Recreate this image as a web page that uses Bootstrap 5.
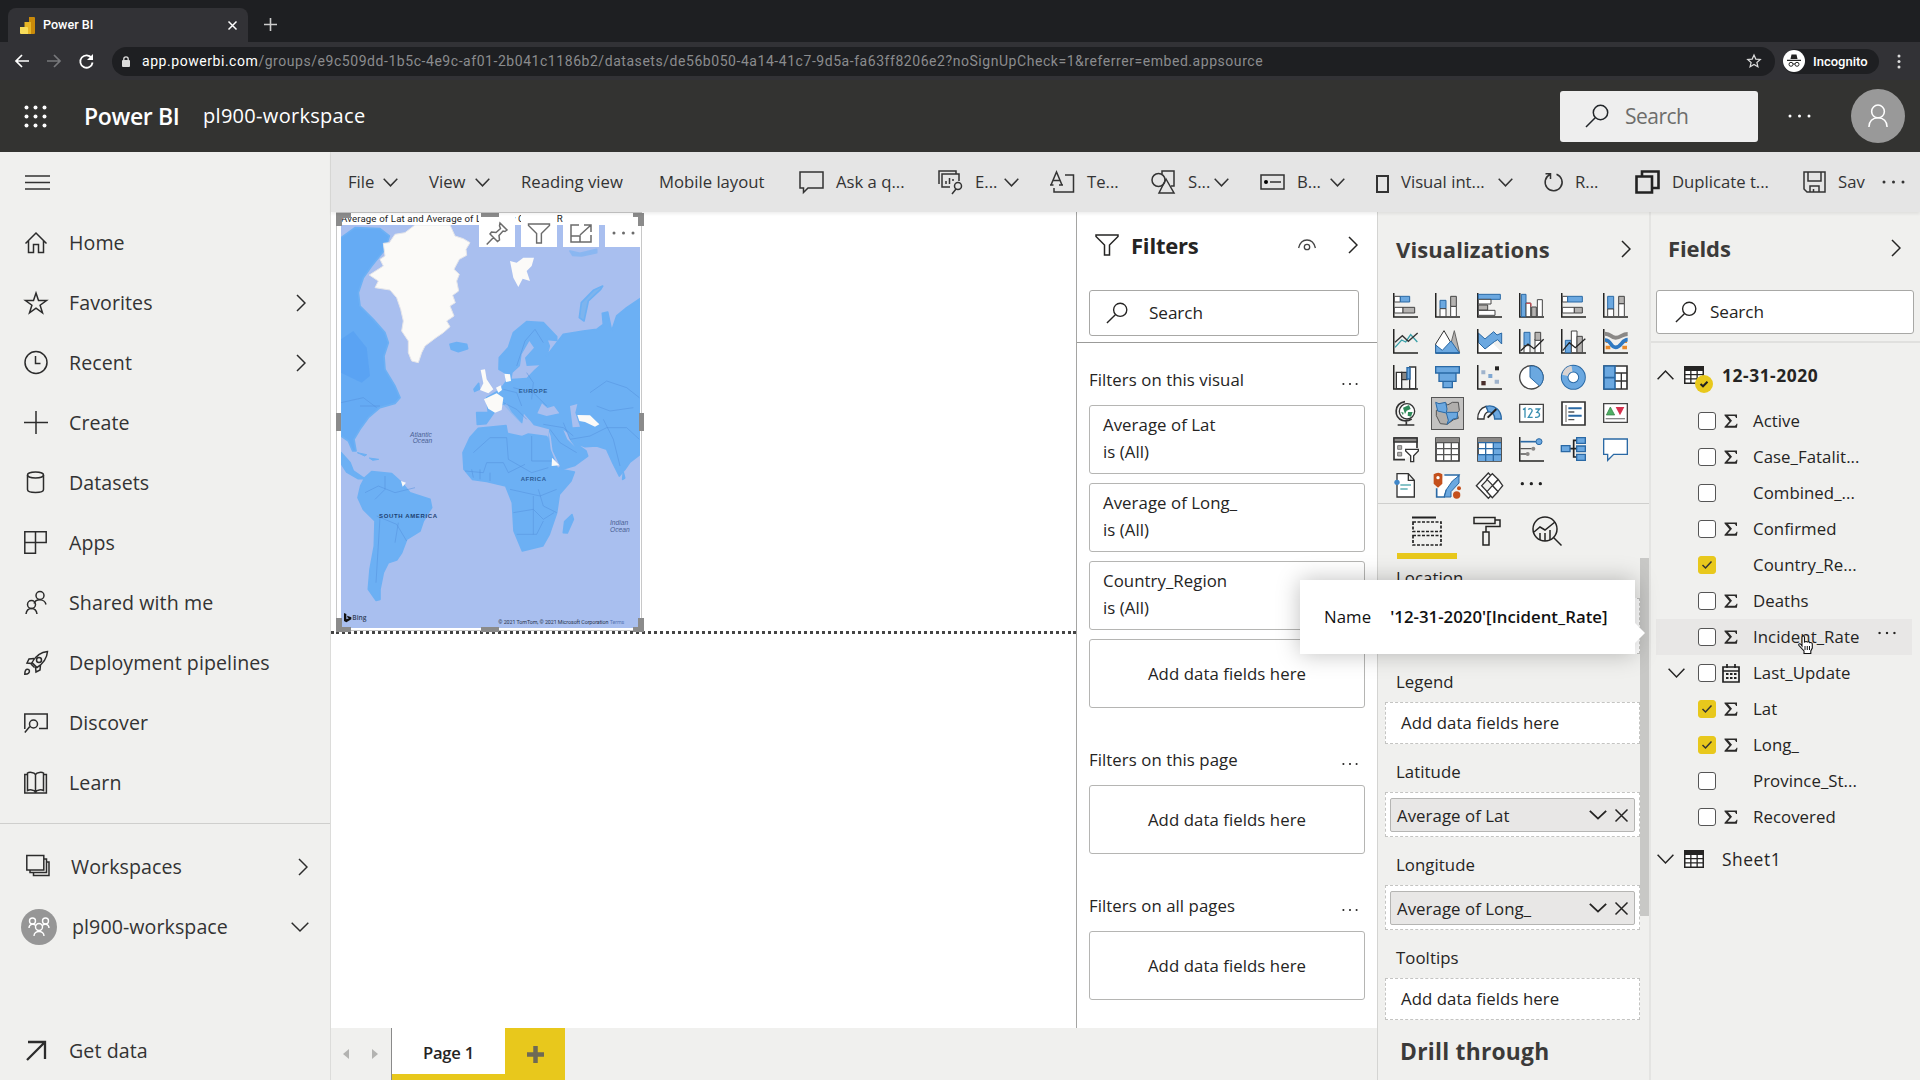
<!DOCTYPE html>
<html lang="en">
<head>
<meta charset="utf-8">
<title>Power BI</title>
<meta name="viewport" content="width=device-width, initial-scale=1">
<link href="https://cdn.jsdelivr.net/npm/bootstrap@5.3.0/dist/css/bootstrap.min.css" rel="stylesheet">
<style>
:root{--ink:#252423;--pane:#f0f0ee;--gold:#e8c81c}
body{width:1920px;height:1080px;overflow:hidden;font-family:"Open Sans","Noto Sans",sans-serif;font-size:17px;line-height:22px;color:var(--ink);background:#fff;margin:0}
svg{display:block;flex:none;overflow:visible}
.ln{fill:none;stroke:currentColor;stroke-width:1.5}
.nowrap{white-space:nowrap}
/* browser chrome */
.tabstrip{height:42px;background:#1e1f22;padding:8px 0 0 8px}
.tab{width:240px;height:34px;background:#323236;border-radius:8px 8px 0 0;padding:0 11px 0 12px;color:#fff;font:500 12.6px/34px Roboto,sans-serif}
.urlbar{height:38px;background:#323236;color:#fff;padding:0 15px}
.omni{width:1663px;height:29px;border-radius:15px;background:#1e1f22;padding:0 14px 0 10px;font:14px/28px Roboto,sans-serif;color:#8b8c8e;margin-left:18px}
.omni b{font-weight:400;color:#fff}
.url{letter-spacing:.55px}
.incog{width:96px;height:25px;border-radius:13px;background:#1e1f22;font:500 13px/25px Roboto,sans-serif}
/* app header */
.apphead{height:72px;background:#333331;color:#fff;padding-left:24px;padding-right:15px}
.brand{font-size:23px;font-weight:600;line-height:30px;letter-spacing:-.35px;width:119px;margin-left:37px}
.wsname{font-size:20px;letter-spacing:.3px}
.headsearch{width:198px;height:51px;border-radius:3px;background:#eee;color:#6d6d6b;font-size:21px;letter-spacing:-.5px;padding-left:25px}
.headdots{width:23px;margin:0 40px 0 30px}
.avatar{width:54px;height:54px;border-radius:50%;background:#999}
/* left navigation */
.sidenav{width:331px;background:var(--pane);border-right:1px solid #dcdcda;font-size:19.6px;letter-spacing:.08px}
.burger{height:61px;padding:0 0 2px 25px}
.navrow{height:60px;padding-left:24px;padding-right:24px;color:#333}
.navrow svg:first-child{width:24px;height:24px;margin-right:21px;color:#2c2c2c}
.navrow .chev{color:#2c2c2c}
.navrow.wsl{padding-left:26px;padding-right:22px}
.navrow.wsx{padding-right:21px}
.navrow.getd{margin-bottom:-1px}
.navsep{height:0;border-top:1px solid #cfcfcd;margin:10px 0 13px}
.wsicon{width:36px;height:36px;border-radius:50%;background:#969696;margin-left:-3px;margin-right:15px}
/* toolbar */
.ribbon{height:60px;background:#e5e5e5;padding-left:17px;color:#333;font-size:16.7px;box-shadow:0 2px 3px #0001;position:relative;z-index:2}
.rb{height:60px;display:flex;align-items:center;white-space:nowrap;flex:none}
.rb>svg:first-child:not(.cv){margin-right:12px}
.rb .cv{margin-left:auto;margin-right:31px}
.w81{width:81px}.w92{width:92px}.w138{width:138px}.w140{width:140px}.w139{width:139px}.w112{width:112px}.w101{width:101px}.w109{width:109px}.w116{width:116px}.w168{width:168px}.w91{width:91px}.w79{width:79px}
/* canvas */
.leftcol{width:1046px}
.canvas{width:745px;height:816px;position:relative}
.pagebreak{position:absolute;left:0;right:0;top:419px;border-top:3px dotted #444}
.visual{position:absolute;left:5px;top:0;width:306px;height:419px;border:1px solid #c8c8c8;background:#fff}
.vtitle{font:9.7px/12px Roboto,sans-serif;height:12px;padding-left:4px;letter-spacing:.12px;color:#222;white-space:nowrap;overflow:hidden}
.mapsvg{margin-left:4px}
.vtools{position:absolute;left:142px;top:2px;gap:6px;color:#6b6b6b}
.vtools>span{width:36px;height:32px;background:#fff;display:flex;align-items:center;justify-content:center;padding-top:4px}
.handles{position:absolute;left:-1px;top:0}
/* filter pane */
.filters{width:301px;border-left:1px solid #a5a5a3;padding-left:12px}
.fhead{height:68px;padding:0 15px 2px 6px}
.ptitle{font-weight:700;font-size:22px;letter-spacing:-.2px;color:#252423}
.sbox{border:1px solid #a8a8a6;border-radius:3px;background:#fff;font-size:17.2px;letter-spacing:-.1px}
.fsearch{width:270px;height:46px;margin-top:10px;padding-left:16px;gap:21px}
.fsep{border-top:1px solid #9b9b99;margin:6px 0 0 -12px}
.fsec{height:77px;padding:27px 19px 0 0}
.fsec.first{height:62px;padding-top:12px}
.fsec svg{margin-top:8px}
.fcard{width:276px;height:69px;border:1px solid #b5b5b3;border-radius:3px;padding:5px 13px;line-height:27px;margin-bottom:9px}
.fcard.add{padding:0;display:flex;align-items:center;justify-content:center}
.fcard.end{margin-bottom:0}
.t17{font-size:16.8px;letter-spacing:.06px}
/* page tabs */
.pagebar{height:52px;background:var(--pane)}
.pgnav{width:61px;padding:0 13px 0 12px;border-right:1px solid #8a8a8a;color:#b3b3b1}
.pgtab{width:113px;background:#fff;border-bottom:6px solid var(--gold);font-weight:600;font-size:16.6px;letter-spacing:-.2px;padding-top:4px}
.pgadd{width:60px;background:var(--gold);color:#6e6a55}
/* visualizations */
.viz{width:272px;background:var(--pane);border-left:1px solid #d4d4d2}
.vhead{height:75px;padding:0 18px 2px 18px}
.vhead .ptitle,.flds .ptitle{color:#3b3a39;letter-spacing:.1px}
.vgrid{display:grid;grid-template-columns:repeat(6,42px);grid-auto-rows:36px;padding-left:6px;border-bottom:1px solid #cfcfcd;place-items:center}
.vgrid>svg{width:25px;height:25px}
.vsel{width:33px;height:33px;border:1px solid #555;background:#c4c3c2;display:flex;align-items:center;justify-content:center}
.vtabs{height:55px;padding-left:19px}
.vtabs>span{width:60px;border-bottom:6px solid transparent;display:flex;align-items:center;justify-content:center;padding-top:4px}
.vtabs>span.on{border-color:var(--gold)}
.wells{width:262px;padding-left:7px}
.wl{height:48px;padding:8px 0 0 11px;line-height:40px}
.wl.loc{height:39px;padding-top:0;line-height:38px}
.wb{width:255px;height:42px;background:#fff;border:1px dashed #c4c4c2;line-height:40px;padding-left:15px}
.wb.lbx{height:56px}
.wb.has{height:45px;padding:5px 4px}
.chip{height:34px;border:1px solid #b5b5b3;border-radius:2px;background:#e8e7e6;padding:0 6px;line-height:31px}
.vbar{width:9px;height:358px;background:#c8c8c6;margin-top:-1px}
.flds .ptitle{letter-spacing:-.1px}
.viz .drill{padding:19px 0 0 15px;height:60px;line-height:26px;white-space:nowrap;letter-spacing:.25px;font-size:22.8px;color:#3b3a39}
/* fields */
.flds{width:271px;background:var(--pane);border-left:2px solid #e4e4e2}
.ffhead{height:78px;padding:0 19px 6px 17px}
.ffsearch{width:258px;height:44px;margin-left:5px;padding-left:18px;gap:13px}
.ffsep{border-top:2px solid #e0e0de;margin-top:7px}
.tblrow{height:60px;padding:4px 0 0 6px}
.tblrow.shut{height:48px;padding-top:0}
.tname{font-size:17.4px;letter-spacing:.55px;padding-left:18px}
.tico{margin-left:10px}
.frow{height:36px;margin:0 8px 0 5px;padding-left:12px}
.frow.hot{background:#e8e7e6}
.crt{width:17px;margin-right:13px}
.cb{width:18px;height:18px;border:1px solid #555;border-radius:3px;background:#fff;margin-right:8px;flex:none}
.cb.on{background:var(--gold);border-color:var(--gold)}
.typ{width:16px;margin-right:13px}
.typ .cal{margin-left:-2px}
/* field tooltip */
.tip{position:absolute;left:1300px;top:580px;width:335px;height:74px;background:#fff;box-shadow:0 0 22px rgba(0,0,0,.25);padding-left:24px;z-index:5;color:#111}
.tip::after{content:"";position:absolute;right:-10px;top:43px;border:10px solid transparent;border-left-color:#fff;border-right:0}
.tip b{font-weight:600;margin-left:19px;letter-spacing:.02px}
.hand{position:absolute;left:1798px;top:635px;z-index:6}
</style>
<script src="https://cdn.jsdelivr.net/npm/bootstrap@5.3.0/dist/js/bootstrap.bundle.min.js"></script>
</head>
<body class="d-flex flex-column">
<svg width="0" height="0" class="position-absolute">
<defs>
<symbol id="cvd" viewBox="0 0 15 9"><path class="ln" d="M.7.8 7.500 7.800 14.300.8"/></symbol>
<symbol id="cvr" viewBox="0 0 10 18"><path class="ln" d="M1 1l8 8-8 8"/></symbol>
<symbol id="mag" viewBox="0 0 24 24"><g class="ln"><circle cx="15.500" cy="8.500" r="7.200"/><path d="M10.200 13.800 1 23"/></g></symbol>
<symbol id="dots" viewBox="0 0 23 4"><g fill="currentColor"><circle cx="2" cy="2" r="1.500"/><circle cx="11.500" cy="2" r="1.500"/><circle cx="21" cy="2" r="1.500"/></g></symbol>
<symbol id="fun" viewBox="0 0 24 22"><path class="ln" d="M1 1h22v1.500l-8.500 8.500v10h-5V11L1 2.500z"/></symbol>
<symbol id="sig" viewBox="0 0 14 14"><path d="M.5.500H13V4h-1C11.700 2.500 11 2 9.500 2H4l4 4.700L3.600 11.700h6.200c1.700 0 2.200-.6 2.700-2h1L12.900 13.700H.5v-1L5.400 7.200.5 1.400z" fill="#2b2a29"/></symbol>
<symbol id="tbl" viewBox="0 0 20 18"><path fill="#252423" d="M0 0h20v18H0z"/><path fill="#fff" d="M1.500 5h4.700v3H1.500zm6 0h5v3h-5zm6.300 0h4.700v3h-4.700zM1.500 9.200h4.700v3H1.500zm6 0h5v3h-5zm6.300 0h4.700v3h-4.700zM1.500 13.500h4.700v3H1.500zm6 0h5v3h-5zm6.300 0h4.700v3h-4.700z"/></symbol>
<symbol id="tick" viewBox="0 0 16 16"><path d="M3.500 8l3 3 6-6.500" fill="none" stroke="#333" stroke-width="1.500"/></symbol>
<symbol id="axes" viewBox="0 0 75 75"><path d="M2 0v72h73" fill="none" stroke="#252423" stroke-width="5"/></symbol>
</defs>
</svg>

<!-- browser -->
<div class="tabstrip d-flex">
  <div class="tab d-flex align-items-center">
    <svg width="15" height="17" viewBox="0 0 15 17"><path fill="#c98a0a" d="M9 0h5q1 0 1 1v15q0 1-1 1H9z"/><path fill="#e9b625" d="M4.500 5H11v12H4.500z"/><path fill="#f7dc5a" d="M0 10h7q1 0 1 1v6H1q-1 0-1-1z"/></svg>
    <span class="ms-2">Power BI</span>
    <svg class="ms-auto" width="9" height="9" viewBox="0 0 9 9"><path d="M.5.500l8 8m0-8l-8 8" stroke="#fff" stroke-width="1.500"/></svg>
  </div>
  <svg class="ms-3 mt-2" width="13" height="17" viewBox="0 0 13 13"><path d="M6.500 0v13M0 6.500h13" stroke="#ccc" stroke-width="1.600"/></svg>
</div>
<div class="urlbar d-flex align-items-center">
  <svg width="14" height="14" viewBox="0 0 14 14"><path d="M14 7H1.500M7 1L1 7l6 6" fill="none" stroke="#fff" stroke-width="1.700"/></svg>
  <svg class="ms-3 me-3" width="18" height="14" viewBox="-2 0 18 14"><path d="M0 7h12.500M7 1l6 6-6 6" fill="none" stroke="#77787b" stroke-width="1.700"/></svg>
  <svg width="15" height="15" viewBox="0 0 15 15"><path d="M12.600 4A6.200 6.200 0 1 0 13.600 8.500" fill="none" stroke="#fff" stroke-width="1.800"/><path d="M14 0v6H8z" fill="#fff"/></svg>
  <div class="omni d-flex align-items-center">
    <svg width="8" height="11" viewBox="0 0 8 11"><rect y="4" width="8" height="7" rx="1" fill="#ddd"/><path d="M1.800 4.500V3a2.200 2.200 0 0 1 4.400 0v1.500" fill="none" stroke="#ddd" stroke-width="1.300"/></svg>
    <span class="url ms-2 ps-1 nowrap"><b>app.powerbi.com</b>/groups/e9c509dd-1b5c-4e9c-af01-2b041c1186b2/datasets/de56b050-4a14-41c7-9d5a-fa63ff8206e2?noSignUpCheck=1&amp;referrer=embed.appsource</span>
    <svg class="ms-auto" width="14" height="14" viewBox="0 0 14 14"><path d="M7 1l1.800 4.100 4.500.4-3.400 3 1 4.300L7 10.500l-3.900 2.300 1-4.300-3.400-3 4.500-.4z" fill="none" stroke="#ddd" stroke-width="1.200"/></svg>
  </div>
  <div class="incog d-flex align-items-center ms-2">
    <svg width="22" height="22" viewBox="0 0 22 22"><circle cx="11" cy="11" r="11" fill="#fff"/><path d="M7.500 9l1-4.500h5l1 4.500zM4 9.700h14v1.200H4z" fill="#222"/><g fill="none" stroke="#222"><circle cx="8" cy="14.300" r="2"/><circle cx="14" cy="14.300" r="2"/><path d="M10 14h2"/></g></svg>
    <span class="ms-2">Incognito</span>
  </div>
  <svg class="ms-auto me-1" width="4" height="15" viewBox="0 0 4 15"><g fill="#ddd"><circle cx="2" cy="2" r="1.500"/><circle cx="2" cy="7.500" r="1.500"/><circle cx="2" cy="13" r="1.500"/></g></svg>
</div>

<!-- app header -->
<header class="apphead d-flex align-items-center">
  <svg width="23" height="23" viewBox="0 0 23 23"><g fill="#fff"><circle cx="2.500" cy="2.500" r="2"/><circle cx="11.500" cy="2.500" r="2"/><circle cx="20.500" cy="2.500" r="2"/><circle cx="2.500" cy="11.500" r="2"/><circle cx="11.500" cy="11.500" r="2"/><circle cx="20.500" cy="11.500" r="2"/><circle cx="2.500" cy="20.500" r="2"/><circle cx="11.500" cy="20.500" r="2"/><circle cx="20.500" cy="20.500" r="2"/></g></svg>
  <span class="brand nowrap">Power BI</span><span class="wsname">pl900-workspace</span>
  <div class="headsearch d-flex align-items-center ms-auto"><svg class="text-dark me-3" width="24" height="24"><use href="#mag"/></svg>Search</div>
  <svg class="headdots" height="4"><use href="#dots"/></svg>
  <div class="avatar d-flex align-items-center justify-content-center"><svg width="20" height="26" viewBox="0 0 22 26"><g fill="none" stroke="#fff" stroke-width="1.700"><circle cx="11" cy="8" r="7"/><path d="M1 25c0-6 4-10 10-10s10 4 10 10"/></g></svg></div>
</header>

<div class="d-flex flex-fill">
<!-- left navigation -->
<nav class="sidenav d-flex flex-column">
  <div class="burger d-flex align-items-center"><svg width="25" height="16" viewBox="0 0 25 16"><path d="M0 2h25M0 8.500h25M0 15h25" stroke="#333" stroke-width="1.600"/></svg></div>
  <div class="navrow d-flex align-items-center"><svg viewBox="0 0 24 24"><path class="ln" d="M1.500 12.500 12 2l10.500 10.500M4.500 10v11.500h5V13.500h5v8h5V10"/></svg>Home</div>
  <div class="navrow d-flex align-items-center"><svg viewBox="0 0 24 24"><path class="ln" d="M12 2l2.500 7.500h8l-6.400 4.700 2.400 7.600L12 17.200l-6.500 4.600 2.400-7.600L1.500 9.500h8z"/></svg>Favorites<svg class="chev ms-auto" width="10" height="18"><use href="#cvr"/></svg></div>
  <div class="navrow d-flex align-items-center"><svg viewBox="0 0 24 24"><g class="ln"><circle cx="12" cy="11.500" r="11"/><path d="M11.500 5v7.500h5"/></g></svg>Recent<svg class="chev ms-auto" width="10" height="18"><use href="#cvr"/></svg></div>
  <div class="navrow d-flex align-items-center"><svg viewBox="0 0 24 24"><path class="ln" d="M12 0v23M0 11.500h24"/></svg>Create</div>
  <div class="navrow d-flex align-items-center"><svg viewBox="0 0 24 24"><g class="ln"><ellipse cx="11.500" cy="4" rx="8" ry="3"/><path d="M3.500 4v14.500c0 4 16 4 16 0V4"/></g></svg>Datasets</div>
  <div class="navrow d-flex align-items-center"><svg viewBox="0 0 24 24"><path class="ln" d="M.8.800h21.400v10.800H.8zM11.500.800v21.400H.8V.8"/></svg>Apps</div>
  <div class="navrow d-flex align-items-center"><svg viewBox="0 0 24 24"><g class="ln"><circle cx="16" cy="4.500" r="4"/><path d="M10 12.500c2-5 10.500-5 12 1"/><circle cx="7.500" cy="13.500" r="4"/><path d="M2 23c1-7.500 10-7.500 11 0"/></g></svg>Shared with me</div>
  <div class="navrow d-flex align-items-center"><svg viewBox="0 0 24 24"><g class="ln" stroke-width="1.400"><path d="M23.500.500c-6 .5-11 3-15.500 11l5 5c7-4.500 10-10 10.500-16zM10 7.500l-5 .5-2 4 5 .5M16.500 14l-.5 5-4 2-.5-5M7 13l3.500 3.500"/><circle cx="15" cy="9" r="2.500"/><path d="M.8 23.200c0-3 .5-5 2.700-5s2.500 2.500 1 4c-1 1-2 1-3.700 1z"/></g></svg>Deployment pipelines</div>
  <div class="navrow d-flex align-items-center"><svg viewBox="0 0 24 24"><g class="ln"><path d="M.8 18V3h22.400v14.500H15M.8 21.500l5-6"/><circle cx="9.500" cy="13" r="4"/></g></svg>Discover</div>
  <div class="navrow d-flex align-items-center"><svg viewBox="0 0 24 24"><path class="ln" d="M11.500 3.500C10 1 5 1 3.500 2v17.500c2-1 6.500-1 8 1.500 1.500-2.500 6-2.500 8-1.500V2C18 1 13 1 11.500 3.500V21M3.500 3.500H.8V22h21.600V3.500h-2.900"/></svg>Learn</div>
  <div class="navsep"></div>
  <div class="navrow wsl d-flex align-items-center"><svg class="mb-1" viewBox="0 0 24 24"><path class="ln" d="M.8 2.500h17V17h-17zM18 6h2.500v13.500H4V17M20.500 9H23v13.500H7.500v-3"/></svg>Workspaces<svg class="chev ms-auto" width="10" height="18"><use href="#cvr"/></svg></div>
  <div class="navrow wsx d-flex align-items-center"><span class="wsicon d-flex align-items-center justify-content-center"><svg class="m-0" viewBox="0 0 24 24"><g fill="none" stroke="#fff" stroke-width="1.400"><circle cx="12" cy="12" r="3.500"/><path d="M7 21c0-6 10-6 10 0"/><circle cx="5.500" cy="6" r="3"/><circle cx="18.500" cy="6" r="3"/><path d="M2 13c0-4 5-5 7-2M22 13c0-4-5-5-7-2"/></g></svg></span>pl900-workspace<svg class="chev ms-auto me-0" width="18" height="10" viewBox="0 0 18 10"><path class="ln" d="M.7.8 9 9l8.300-8.200"/></svg></div>
  <div class="navrow getd d-flex align-items-center mt-auto"><svg viewBox="0 0 24 24"><path d="M3 21 20 4M4 3h17v17" fill="none" stroke="currentColor" stroke-width="2.300"/></svg>Get data</div>
</nav>

<main class="d-flex flex-column flex-fill">
  <div class="ribbon d-flex">
    <div class="rb w81">File<svg class="cv" width="15" height="9"><use href="#cvd"/></svg></div>
    <div class="rb w92">View<svg class="cv" width="15" height="9"><use href="#cvd"/></svg></div>
    <div class="rb w138">Reading view</div>
    <div class="rb w140">Mobile layout</div>
    <div class="rb w139"><svg width="25" height="22" viewBox="0 0 25 22"><path class="ln" d="M1 1h23v16H9l-4.500 4.500V17H1z"/></svg>Ask a q...</div>
    <div class="rb w112"><svg width="25" height="25" viewBox="0 0 25 25"><g class="ln"><path d="M12 17H4V4h17v7M1 14V1h17v3M8 14v-3m3.500 3V8M15 11V9M14 24l4-5"/><circle cx="20" cy="16" r="3.500"/></g></svg>E...<svg class="cv" width="15" height="9"><use href="#cvd"/></svg></div>
    <div class="rb w101"><svg width="25" height="22" viewBox="0 0 25 22"><path class="ln" d="M1 14 6.500 1 12 14M3 9.500h7M0 14h3.500M9 14h4M15 4h8.500v17H4v-4"/></svg>Te...</div>
    <div class="rb w109"><svg width="25" height="24" viewBox="0 0 25 24"><g class="ln"><path d="M11 4V1h12v15h-3"/><circle cx="7.500" cy="10" r="6.500"/><path d="M15 9l8 14H8z"/></g></svg>S...<svg class="cv" width="15" height="9"><use href="#cvd"/></svg></div>
    <div class="rb w116"><svg width="25" height="16" viewBox="0 0 25 16"><path class="ln" d="M1 1h23v14H1zM10 8h11"/><circle cx="6" cy="8" r="2"/></svg>B...<svg class="cv" width="15" height="9"><use href="#cvd"/></svg></div>
    <div class="rb w168"><svg class="mt-1" width="13" height="18" viewBox="0 0 13 18"><path d="M1 1h11v16H1z" fill="none" stroke="currentColor" stroke-width="2"/></svg>Visual int...<svg class="cv" width="15" height="9"><use href="#cvd"/></svg></div>
    <div class="rb w91"><svg width="19" height="20" viewBox="0 0 19 20"><path class="ln" d="M6 2.500A8.500 8.500 0 1 0 12.500 2.200M1.500 1.800H6.500V7"/></svg>R...</div>
    <div class="rb w168"><svg width="25" height="24" viewBox="0 0 25 24"><path d="M1.500 6.500H17v16H1.500zM7 6V1.500h16.500V18H17" fill="none" stroke="#222" stroke-width="2.600"/></svg>Duplicate t...</div>
    <div class="rb w79"><svg width="23" height="22" viewBox="0 0 23 22"><path class="ln" d="M1 1h21v20H4l-3-3zM5 1v9h13V1M7 21v-6h9v6M10.500 21v-3"/></svg>Sav</div>
    <div class="rb"><svg width="23" height="4"><use href="#dots"/></svg></div>
  </div>

  <div class="d-flex flex-fill">
  <div class="leftcol d-flex flex-column">
    <div class="d-flex">
      <section class="canvas">
        <div class="pagebreak"></div>
        <div class="visual">
          <div class="vtitle">Average of Lat and Average of Long_ by Country_Region</div>
          <svg class="mapsvg" width="299" height="403" viewBox="33 57 897 1209" style="overflow:hidden">
            <path fill="#a9bfef" d="M33 57h897v1209H33z"/>
            <g fill="#6cb0f4" stroke="#6cb0f4" stroke-width="5" stroke-linejoin="round">
              <path fill="#65abf4" d="M33 95 75 65 150 68 178 90 165 130 125 180 100 215 85 260 90 300 130 340 165 380 175 410 162 450 165 490 195 540 210 575 195 592 150 605 115 635 90 670 72 700 78 735 68 735 55 705 33 690Z"/>
              <path d="M33 740 60 770 70 795 95 812 105 818 85 818 50 798 33 772Z"/><path d="M82 740 110 746 104 750ZM118 756 146 760 128 763Z" stroke-width="3"/>
              <path d="M105 815 125 797 185 803 215 830 240 860 300 880 305 905 280 945 270 975 230 1000 215 1040 200 1062 175 1070 160 1100 150 1150 150 1180 138 1183 115 1150 120 1090 133 1020 135 945 100 910 84 875 92 840Z"/>
              <path d="M360 415 380 410 410 415 413 428 385 437 364 430Z"/>
              <path d="M507 490 508 455 535 425 550 380 590 347 640 350 680 392 680 403 650 400 658 420 650 450 700 385 760 375 800 370 820 355 817 322 833 318 845 375 860 330 890 305 930 278V745L900 768 885 790 868 810 848 770 830 730 800 720 765 722 735 710 722 702 768 735 773 750 735 778 694 790 678 760 657 700 660 668 612 655 600 640 580 618 575 650 545 620 520 592 495 615 468 653 442 655 440 620 475 620 470 575 510 552 530 525 525 500Z"/>
              <path d="M399 740 420 695 445 667 528 659 532 682 575 692 595 684 650 692 665 725 690 790 733 798 723 825 688 865 680 920 658 985 638 1020 577 1035 552 975 547 890 527 840 470 826 427 820 402 790Z"/>
              <path d="M748 335 754 290 790 253 818 240 812 250 775 285 762 345Z" fill="#7db4ee"/>
              <path d="M720 135 750 142 800 130 800 140 755 150 728 148Z" opacity=".5"/>
              <path d="M432 550 446 532 448 550 434 556ZM726 926 730 940 712 981 700 980 704 947ZM880 800 884 816 878 820Z"/>
            </g>
            <path fill="#529cf3" d="M33 400 70 375 110 425 120 510 95 530 33 500Z" opacity=".55"/>
            <g fill="#a9bfef"><path d="M598 405 612 425 585 455 590 480 628 478 612 492 590 515 545 518 548 500 570 480 575 445Z"/><path d="M622 622 636 592 652 606 672 600 688 622 650 630Z"/><path d="M720 600 742 594 736 620 750 662 728 664Z"/><path d="M655 672 662 690 668 735 690 780 684 785 662 730Z"/><path d="M530 592 545 618 578 655 560 658 520 600Z" opacity=".6"/><path d="M700 672 712 700 735 722 722 706 712 680Z"/></g>
            <g fill="#fbfaf8">
              <path stroke="#e6e6ea" stroke-width="3" d="M118 207 160 180 150 160 165 150 160 112 178 110 195 85 225 80 255 57H360L375 90 400 98 420 110 408 130 410 148 388 160 372 190 388 205 380 225 386 255 368 268 376 290 360 300 372 330 350 345 360 362 340 380 318 395 285 420 275 440 265 470 245 465 235 440 235 405 215 375 220 345 212 310 200 275 180 252 135 245 145 225Z"/>
              <path d="M540 165 560 170 580 155 612 155 605 180 590 195 600 225 578 218 565 243 550 215ZM452 492 465 490 470 520 490 550 475 562 450 552 460 532ZM462 580 500 562 520 575 515 612 495 620 475 608ZM498 545 512 538 516 552 505 560ZM523 503 540 505 543 525 528 528ZM742 627 780 628 808 655 795 662 765 648 748 645ZM666 755 688 778 665 780ZM213 825 228 830 218 842Z"/>
            </g>
            <g fill="none" stroke="#5390dc" stroke-width="2" opacity=".75"><path d="M430 740 480 695 530 695 535 760 605 800 655 785M605 690V765H665M405 795 460 800 470 770 520 770 535 800 585 775M540 850 630 870 680 850M550 920 610 910 640 940 672 920M560 985 620 985 640 945M610 870V985M625 850 640 900 680 920M550 545 610 560 650 600M520 590 560 610 590 640M590 500 610 530 605 580M780 560 830 525 890 545 928 575M780 690 830 665 890 665 928 700M700 650 720 700 780 690M800 600 840 615 910 605M105 860 145 840 195 860 255 845M140 930 200 955 230 1005M205 950 195 1010M660 670 690 710 740 740M90 600H150M150 935 138 1130M560 480 585 405 615 370 640 410M425 790 430 815M450 790V820M480 800V825M520 550 560 560 575 600M165 810V850L135 880M640 655 700 665 730 690M820 640 850 700 870 780M33 590 100 575 140 605"/></g>
            <g font-family="Liberation Sans,sans-serif" fill="#2d5c93" font-size="18" font-weight="600"><text x="566" y="560" textLength="86">EUROPE</text><text x="572" y="825" textLength="76">AFRICA</text><text x="147" y="937" fill="#1d3f70" textLength="174">SOUTH AMERICA</text></g>
            <g font-family="Liberation Sans,sans-serif" fill="#4b6294" font-size="20" font-style="italic"><text x="240" y="692">Atlantic</text><text x="248" y="711">Ocean</text><text x="840" y="957">Indian</text><text x="840" y="979">Ocean</text></g>
            <path d="M42 1221l7 3v16l8-3-4-2-2-6 13 5v6l-15 9-7-4z" fill="#111"/>
            <text x="67" y="1243" font-family="Open Sans,sans-serif" font-size="20" font-weight="600" fill="#33415c">Bing</text>
            <text x="505" y="1254" font-family="Roboto,sans-serif" font-size="16" fill="#28324a" textLength="378">© 2021 TomTom, © 2021 Microsoft Corporation <tspan fill="#5876b5">Terms</tspan></text>
          </svg>
          <div class="vtools d-flex">
            <span><svg width="22" height="23" viewBox="0 0 22 23"><path class="ln" d="M14 1l7 7-2 1.500-2-.5-4 4.500.5 4.500-2 1.500L4 12l1.500-2 4.500.5 4.500-4-1-2.500zM7.500 15.500.7 22.500"/></svg></span>
            <span><svg width="24" height="21"><use href="#fun"/></svg></span>
            <span><svg width="22" height="19" viewBox="0 0 22 19"><path class="ln" d="M9 1H1v17h20v-7M1 12h9v6M10 11 21 1M14 1h7v7"/></svg></span>
            <span><svg width="23" height="4"><use href="#dots"/></svg></span>
          </div>
          <svg class="handles" width="308" height="419" viewBox="0 0 308 419"><path fill="#8b8b8b" d="M0 0h15v5H6v8H0zM145 0h18v4h-18zM297 0h11v13h-6V4h-5zM0 200h5v18H0zM303 200h5v18h-5zM0 405h6v9h9v5H0zM145 414h18v5h-18zM302 405h6v14h-11v-5h5z"/></svg>
        </div>
      </section>

      <section class="filters">
        <div class="fhead d-flex align-items-center"><svg width="24" height="22"><use href="#fun"/></svg><span class="ptitle ms-2 ps-1">Filters</span>
          <svg class="ms-auto me-4" width="18" height="12" viewBox="0 0 18 12"><g fill="none" stroke="#444" stroke-width="1.300"><path d="M.6 9C2 3 5 1 9 1s7 2 8.400 8"/><circle cx="9" cy="8" r="2.700"/></g></svg>
          <svg class="ms-2 me-1" width="10" height="18"><use href="#cvr"/></svg></div>
        <div class="sbox fsearch d-flex align-items-center"><svg width="22" height="22"><use href="#mag"/></svg>Search</div>
        <div class="fsep"></div>
        <div class="fsec first d-flex align-items-center t17">Filters on this visual<svg class="ms-auto" width="16" height="4" viewBox="0 0 23 4"><use href="#dots" width="23" height="4"/></svg></div>
        <div class="fcard t17">Average of Lat<br>is (All)</div>
        <div class="fcard t17">Average of Long_<br>is (All)</div>
        <div class="fcard t17">Country_Region<br>is (All)</div>
        <div class="fcard add end t17">Add data fields here</div>
        <div class="fsec d-flex align-items-center t17">Filters on this page<svg class="ms-auto" width="16" height="4" viewBox="0 0 23 4"><use href="#dots" width="23" height="4"/></svg></div>
        <div class="fcard add end t17">Add data fields here</div>
        <div class="fsec d-flex align-items-center t17">Filters on all pages<svg class="ms-auto" width="16" height="4" viewBox="0 0 23 4"><use href="#dots" width="23" height="4"/></svg></div>
        <div class="fcard add end t17">Add data fields here</div>
      </section>
    </div>
    <div class="pagebar d-flex">
      <div class="pgnav d-flex align-items-center justify-content-between"><svg width="6" height="10"><path d="M6 0v10L0 5z" fill="currentColor"/></svg><svg width="6" height="10"><path d="M0 0v10l6-5z" fill="currentColor"/></svg></div>
      <div class="pgtab d-flex align-items-center justify-content-center">Page 1</div>
      <div class="pgadd d-flex align-items-center justify-content-center"><svg width="17" height="17"><path d="M8.500 0v17M0 8.500h17" stroke="currentColor" stroke-width="4.500"/></svg></div>
    </div>
  </div>

  <section class="viz">
    <div class="vhead d-flex align-items-center justify-content-between"><span class="ptitle">Visualizations</span><svg width="10" height="18"><use href="#cvr"/></svg></div>
    <div class="vgrid">
      <svg viewBox="0 0 75 75"><use href="#axes"/><g stroke="#444" stroke-width="3"><path fill="#fff" d="M4 10h18v17H4zM4 43h26v17H4z"/><path fill="#6ba8e0" stroke="#2a69a5" d="M22 10h28v17H22z"/><path fill="#b5b3b1" d="M30 43h35v17H30z"/></g></svg>
      <svg viewBox="0 0 75 75"><use href="#axes"/><g stroke="#444" stroke-width="3"><path fill="#6ba8e0" stroke="#2a69a5" d="M15 22h18v25H15z"/><path fill="#fff" d="M15 47h18v24H15zM47 40h17v31H47z"/><path fill="#b5b3b1" d="M47 10h17v30H47z"/></g></svg>
      <svg viewBox="0 0 75 75"><use href="#axes"/><g stroke="#444" stroke-width="3"><path fill="#6ba8e0" stroke="#2a69a5" d="M4 4h66v15H4z"/><path fill="#fff" d="M4 19h38v14H4zM4 52h50v15H4z"/><path fill="#b5b3b1" d="M4 36h28v15H4z"/></g></svg>
      <svg viewBox="0 0 75 75"><use href="#axes"/><g stroke="#444" stroke-width="3"><path fill="#6ba8e0" stroke="#2a69a5" d="M7 4h14v67H7z"/><path fill="#fff" d="M21 30h14v41H21zM55 20h15v51H55z"/><path fill="#b5b3b1" d="M38 42h14v29H38z"/><path fill="none" stroke="#d64550" d="M22 31h14v10"/></g></svg>
      <svg viewBox="0 0 75 75"><use href="#axes"/><g stroke="#444" stroke-width="3"><path fill="#fff" d="M4 10h16v17H4zM4 43h36v17H4z"/><path fill="#6ba8e0" stroke="#2a69a5" d="M20 10h44v17H20z"/><path fill="#b5b3b1" d="M40 43h24v17H40z"/></g></svg>
      <svg viewBox="0 0 75 75"><use href="#axes"/><g stroke="#444" stroke-width="3"><path fill="#6ba8e0" stroke="#2a69a5" d="M14 10h18v38H14z"/><path fill="#fff" d="M14 48h18v23H14zM47 32h17v39H47z"/><path fill="#b5b3b1" d="M47 10h17v22H47z"/></g></svg>

      <svg viewBox="0 0 75 75"><use href="#axes"/><g fill="none" stroke-width="4"><path stroke="#3aa0a8" d="M6 55l20-22 12 6 15-22 20 22"/><path stroke="#333" d="M6 40 28 20l18 17L74 12"/></g></svg>
      <svg viewBox="0 0 75 75"><g stroke-width="3"><path fill="#b5b3b1" stroke="#666" d="M58 5 74 72H40z"/><path fill="#fff" stroke="#333" d="M27 5 50 45 40 72H2V45z"/><path fill="#6ba8e0" stroke="#2a69a5" d="M2 48l20 16 26-28 25 36H2z"/><path stroke="#2a69a5" stroke-width="5" d="M1 72h73"/></g></svg>
      <svg viewBox="0 0 75 75"><path fill="#fff" d="M5 40l18 18 20-20 30 30v5H5z"/><path fill="#6ba8e0" stroke="#2a69a5" stroke-width="3" d="M4 12 24 30 50 8 60 18 74 12V45L62 32 52 38 24 60 4 40z"/><use href="#axes"/></svg>
      <svg viewBox="0 0 75 75"><use href="#axes"/><g stroke="#444" stroke-width="3"><path fill="#6ba8e0" stroke="#2a69a5" d="M15 10h18v40H15z"/><path fill="#fff" d="M15 50h18v21H15zM48 30h17v41H48z"/><path fill="#b5b3b1" d="M48 10h17v24H48z"/><path fill="none" stroke="#222" stroke-width="4" d="M5 65l22-20 18 14 29-28"/></g></svg>
      <svg viewBox="0 0 75 75"><use href="#axes"/><g stroke="#444" stroke-width="3"><path fill="#6ba8e0" stroke="#2a69a5" d="M13 34h18v37H13z"/><path fill="#fff" d="M31 6h17v65H31z"/><path fill="#b5b3b1" d="M48 22h16v49H48z"/><path fill="none" stroke="#222" stroke-width="4" d="M5 65l20-24 18 15 30-27"/></g></svg>
      <svg viewBox="0 0 75 75"><path fill="#e8892b" d="M8 32h12v10H8zM58 32h14v10H58zM8 50h14v11H8zM58 50h14v11H58z"/><path fill="none" stroke="#8a8886" stroke-width="12" d="M6 14c20 0 15 12 32 12s18-11 36-11"/><path fill="none" stroke="#2f79c2" stroke-width="11" d="M6 33c20 0 15 22 32 22s18-23 36-23"/><use href="#axes"/></svg>

      <svg viewBox="0 0 75 75"><use href="#axes"/><g stroke="#333" stroke-width="4"><path fill="#fff" d="M10 22h16v49H10zM50 6h18v65H50z"/><path fill="#8a8886" d="M26 22h16v22H26z"/><path fill="#6ba8e0" stroke="#2a69a5" d="M42 8h9v34h-9z"/></g></svg>
      <svg viewBox="0 0 75 75"><path fill="#6ba8e0" stroke="#2a69a5" stroke-width="4" d="M2 5h71v19H2zM12 24h51v25H12zM24 49h28v19H24z"/></svg>
      <svg viewBox="0 0 75 75"><use href="#axes"/><path fill="#9fb3cc" d="M13 16h12v12H13zM53 44h13v12H53z"/><path fill="#7fa7d2" d="M34 27h12v12H34z"/><path fill="#252423" d="M54 4h12v12H54z"/><path fill="#4a2f2c" d="M13 48h13v13H13z"/></svg>
      <svg viewBox="0 0 75 75"><circle cx="37" cy="37" r="35" fill="#fff" stroke="#444" stroke-width="4"/><path fill="#6ba8e0" stroke="#2a69a5" stroke-width="3" d="M33 3a35 35 0 0 1 29 60L33 37z"/></svg>
      <svg viewBox="0 0 75 75"><circle cx="37" cy="37" r="26" fill="#fff" stroke="#2a69a5" stroke-width="23"/><circle cx="37" cy="37" r="26" fill="none" stroke="#6ba8e0" stroke-width="17"/><path d="M33 11A26 26 0 0 0 12 31" stroke="#d9d3d1" stroke-width="17" fill="none"/></svg>
      <svg viewBox="0 0 75 75"><path fill="#fff" stroke="#333" stroke-width="5" d="M3 3h69v69H3z"/><path fill="#6ba8e0" stroke="#2a69a5" stroke-width="5" d="M3 3h33v69H3zM3 38h33"/><path stroke="#333" stroke-width="4" fill="none" d="M37 24h35M37 48h35M55 24v48"/></svg>

      <svg viewBox="0 0 75 75"><circle cx="42" cy="31" r="23" fill="#fff" stroke="#333" stroke-width="4"/><path fill="#2f8a5a" d="M30 20l18-8 5 12-12 5-5 10zM45 33l14 0-5 14-10-3zM24 32l8 3-2 8z"/><path fill="none" stroke="#333" stroke-width="5" d="M36 2C2 8 2 50 28 58c12 4 22 0 28-4M40 60v12M14 72h50"/></svg>
      <span class="vsel"><svg width="25" height="25" viewBox="0 0 75 75"><path fill="#b0aeac" stroke="#555" stroke-width="3" d="M38 12 52 4 70 4 73 28 66 36 70 52 56 56 36 70 16 68 4 44 4 28 32 28 34 8z"/><path fill="#6ba8e0" stroke="#2a69a5" stroke-width="3" d="M2 4 12 8 32 4 36 24 34 34H68L66 52 54 54 36 70 40 58 34 36 8 30zM4 44"/></svg></span>
      <svg viewBox="0 0 75 75"><path fill="#fff" stroke="#333" stroke-width="4" d="M2 54c0-24 12-34 25-38l8 16c-8 2-14 10-14 22z"/><path fill="#6ba8e0" stroke="#2a69a5" stroke-width="4" d="M28 16c26-6 45 12 45 38H53c0-12-6-21-20-22z"/><path d="M32 50l26-26" stroke="#222" stroke-width="6"/></svg>
      <svg viewBox="0 0 75 75"><path fill="#fff" stroke="#444" stroke-width="4" d="M2 10h71v53H2z"/><path fill="none" stroke="#3a8fb0" stroke-width="4" d="M12 26l6-4v28M28 26c4-6 13-3 11 5L28 49h13M49 24h13l-8 10c10 0 11 15-2 15h-4"/></svg>
      <svg viewBox="0 0 75 75"><path fill="#fff" stroke="#333" stroke-width="5" d="M3 3h69v69H3z"/><path stroke="#8a8886" stroke-width="4" d="M15 12v51"/><path stroke="#2a69a5" stroke-width="6" d="M22 22h40M22 44h40"/><path stroke="#555" stroke-width="4" d="M22 33h18M22 56h18"/></svg>
      <svg viewBox="0 0 75 75"><path fill="#fff" stroke="#444" stroke-width="4" d="M2 8h71v56H2z"/><path fill="#4fae63" stroke="#2d7a40" stroke-width="2" d="M10 42h25L22 18z"/><path fill="#d6304d" d="M38 18h26L51 43z"/><path stroke="#888" stroke-width="4" d="M8 53h58"/></svg>

      <svg viewBox="0 0 75 75"><path fill="#fff" stroke="#333" stroke-width="5" d="M36 68H3V3h69v30"/><path d="M3 3h69v12H3z" fill="#8a8886" stroke="#333" stroke-width="4"/><path fill="#b5b3b1" stroke="#777" stroke-width="3" d="M14 26h12v11H14zM14 46h12v11H14z"/><path fill="#fff" stroke="#333" stroke-width="4" d="M38 37h38v5L62 56v18h-9V56L38 42z"/></svg>
      <svg viewBox="0 0 75 75"><path fill="#fff" stroke="#333" stroke-width="5" d="M3 3h69v69H3z"/><path d="M3 3h69v14H3z" fill="#8a8886"/><path fill="none" stroke="#555" stroke-width="4" d="M3 17h69M3 35h69M3 53h69M26 17v55M49 17v55"/></svg>
      <svg viewBox="0 0 75 75"><path fill="#fff" stroke="#333" stroke-width="5" d="M3 3h69v69H3z"/><path d="M3 3h69v14H3z" fill="#8a8886"/><path fill="#6ba8e0" d="M49 17h23v55H3V53h46z"/><path fill="none" stroke="#2a69a5" stroke-width="4" d="M3 17h69M3 35h69M3 53h69M26 17v55M49 17v55"/></svg>
      <svg viewBox="0 0 75 75"><use href="#axes"/><path stroke="#2a69a5" stroke-width="5" d="M4 14h48"/><circle cx="60" cy="14" r="9" fill="#6ba8e0" stroke="#2a69a5" stroke-width="3"/><path stroke="#555" stroke-width="4" d="M4 35h34M4 51h17"/><circle cx="43" cy="35" r="6" fill="#8a8886"/><circle cx="26" cy="51" r="6" fill="#8a8886"/></svg>
      <svg viewBox="0 0 75 75"><path fill="none" stroke="#222" stroke-width="5" d="M26 35h22M48 10H38v50h10"/><path fill="#6ba8e0" stroke="#2a69a5" stroke-width="4" d="M1 26h26v18H1zM47 2h26v17H47zM47 27h26v17H47zM47 52h26v18H47z"/></svg>
      <svg viewBox="0 0 75 75"><path fill="#fff" stroke="#2a69a5" stroke-width="4" d="M2 6h71v46H32L14 70V52H2z"/></svg>

      <svg viewBox="0 0 75 75"><path fill="#fff" stroke="#333" stroke-width="4" d="M12 2h34l18 20v50H12zM46 2v20h18"/><circle cx="12" cy="28" r="8" fill="#3f86c8"/><path stroke="#5fb0b5" stroke-width="4" d="M22 36h32M22 48h22"/></svg>
      <svg viewBox="0 0 75 75"><path fill="#fff" stroke="#2a69a5" stroke-width="5" d="M28 6h44L58 38 34 52 28 72H5V46"/><path fill="#6ba8e0" stroke="#2a69a5" stroke-width="3" d="M52 24l20-16v22L48 56v16H28l6-22z"/><path fill="#c4501c" d="M-4 4Q10-6 22 4v28L9 44-4 32z"/><circle cx="9" cy="14" r="5" fill="#fff"/><circle cx="65" cy="66" r="11" fill="#c4501c"/><circle cx="72" cy="46" r="6" fill="#c4501c"/></svg>
      <svg viewBox="0 0 75 75"><g fill="#fff" stroke="#333" stroke-width="4"><path d="M34 0-2 38l36 38 8-8-28-30L42 8z"/><path d="M46 2 30 19l17 18 16-18zM64 20 47 38l16 17 14-17zM46 38 30 56l16 18 17-18z"/></g></svg>
      <svg viewBox="0 0 75 75"><g fill="#222"><circle cx="10" cy="32" r="5"/><circle cx="37" cy="32" r="5"/><circle cx="64" cy="32" r="5"/></g></svg>
    </div>
    <div class="vtabs d-flex">
      <span class="on"><svg width="30" height="30" viewBox="0 0 30 30"><path d="M0 1.500h24" stroke="#222" stroke-width="2"/><path fill="none" stroke="#222" stroke-width="1.700" stroke-dasharray="3 1.500" d="M1 6h28v9.500H1zM1 19.500h28V29H1z"/></svg></span>
      <span><svg width="28" height="30" viewBox="0 0 28 30"><path class="ln" d="M1 1.500h21v6H1zM22 4h5v6.500H13V16M10 16h6v13h-6z"/></svg></span>
      <span><svg width="30" height="30" viewBox="0 0 30 30"><g class="ln"><circle cx="13" cy="13" r="12"/><path d="M2 16l6-5 5 3 10-8M8 24v-7M13 25v-8M18 24V14M21.500 21.500 29.500 29.500"/></g></svg></span>
    </div>
    <div class="d-flex">
      <div class="wells t17">
        <div class="wl loc">Location</div><div class="wb lbx"></div>
        <div class="wl">Legend</div><div class="wb">Add data fields here</div>
        <div class="wl">Latitude</div>
        <div class="wb has"><div class="chip d-flex align-items-center">Average of Lat<svg class="ms-auto me-2" width="18" height="10" viewBox="0 0 15 9" preserveAspectRatio="none"><use href="#cvd" width="15" height="9"/></svg><svg width="13" height="13"><path class="ln" d="M.5.500l12 12m0-12l-12 12"/></svg></div></div>
        <div class="wl">Longitude</div>
        <div class="wb has"><div class="chip d-flex align-items-center">Average of Long_<svg class="ms-auto me-2" width="18" height="10" viewBox="0 0 15 9" preserveAspectRatio="none"><use href="#cvd" width="15" height="9"/></svg><svg width="13" height="13"><path class="ln" d="M.5.500l12 12m0-12l-12 12"/></svg></div></div>
        <div class="wl">Tooltips</div><div class="wb">Add data fields here</div>
        <div class="ptitle drill">Drill through</div>
      </div>
      <div class="vbar"></div>
    </div>
  </section>

  <section class="flds t17">
    <div class="ffhead d-flex align-items-center justify-content-between"><span class="ptitle">Fields</span><svg width="10" height="18"><use href="#cvr"/></svg></div>
    <div class="sbox ffsearch d-flex align-items-center"><svg width="22" height="22"><use href="#mag"/></svg>Search</div>
    <div class="ffsep"></div>
    <div class="tblrow d-flex align-items-center">
      <svg width="17" height="10" viewBox="0 0 17 10"><path class="ln" d="M.6 9.200 8.500 1l7.900 8.200"/></svg>
      <span class="tico position-relative"><svg width="20" height="18"><use href="#tbl"/></svg><svg class="position-absolute top-100 start-100 translate-middle" width="18" height="18" viewBox="0 0 18 18"><circle cx="9" cy="9" r="9" fill="#e8c81c"/><path d="M5.500 9l2.500 2.300 4.500-4.500" fill="none" stroke="#222" stroke-width="2"/></svg></span>
      <b class="tname">12-31-2020</b>
    </div>
    <div class="frow d-flex align-items-center"><span class="crt"></span><span class="cb"></span><span class="typ"><svg width="14" height="14"><use href="#sig"/></svg></span>Active</div>
    <div class="frow d-flex align-items-center"><span class="crt"></span><span class="cb"></span><span class="typ"><svg width="14" height="14"><use href="#sig"/></svg></span>Case_Fatalit...</div>
    <div class="frow d-flex align-items-center"><span class="crt"></span><span class="cb"></span><span class="typ"></span>Combined_...</div>
    <div class="frow d-flex align-items-center"><span class="crt"></span><span class="cb"></span><span class="typ"><svg width="14" height="14"><use href="#sig"/></svg></span>Confirmed</div>
    <div class="frow d-flex align-items-center"><span class="crt"></span><span class="cb on"><svg width="16" height="16"><use href="#tick"/></svg></span><span class="typ"></span>Country_Re...</div>
    <div class="frow d-flex align-items-center"><span class="crt"></span><span class="cb"></span><span class="typ"><svg width="14" height="14"><use href="#sig"/></svg></span>Deaths</div>
    <div class="frow hot d-flex align-items-center"><span class="crt"></span><span class="cb"></span><span class="typ"><svg width="14" height="14"><use href="#sig"/></svg></span>Incident_Rate<svg class="ms-auto me-3 mb-2" width="18" height="4" viewBox="0 0 23 4"><use href="#dots" width="23" height="4"/></svg></div>
    <div class="frow d-flex align-items-center"><span class="crt"><svg width="17" height="10" viewBox="0 0 17 10"><path class="ln" d="M.6.800 8.500 9l7.900-8.200"/></svg></span><span class="cb"></span><span class="typ"><svg class="cal" width="18" height="19" viewBox="0 0 18 19"><path d="M1 3h16v15H1zM1 7h16M5 0v4M13 0v4" fill="none" stroke="#222" stroke-width="1.700"/><path d="M4 9h2.500v2H4zm4 0h2.500v2H8zm4 0h2.500v2H12zM4 13h2.500v2H4zm4 0h2.500v2H8zm4 0h2.500v2H12z" fill="#222"/></svg></span>Last_Update</div>
    <div class="frow d-flex align-items-center"><span class="crt"></span><span class="cb on"><svg width="16" height="16"><use href="#tick"/></svg></span><span class="typ"><svg width="14" height="14"><use href="#sig"/></svg></span>Lat</div>
    <div class="frow d-flex align-items-center"><span class="crt"></span><span class="cb on"><svg width="16" height="16"><use href="#tick"/></svg></span><span class="typ"><svg width="14" height="14"><use href="#sig"/></svg></span>Long_</div>
    <div class="frow d-flex align-items-center"><span class="crt"></span><span class="cb"></span><span class="typ"></span>Province_St...</div>
    <div class="frow d-flex align-items-center"><span class="crt"></span><span class="cb"></span><span class="typ"><svg width="14" height="14"><use href="#sig"/></svg></span>Recovered</div>
    <div class="tblrow shut d-flex align-items-center"><svg width="17" height="10" viewBox="0 0 17 10"><path class="ln" d="M.6.800 8.500 9l7.900-8.200"/></svg><svg class="tico" width="20" height="18"><use href="#tbl"/></svg><span class="tname fs-inherit">Sheet1</span></div>
  </section>
  </div>
</main>
</div>

<div class="tip d-flex align-items-center t17"><span>Name</span><b>'12-31-2020'[Incident_Rate]</b></div>
<svg class="hand" width="15" height="19" viewBox="0 0 15 19"><path d="M4 11V2.500C4 .5 6.500.5 6.500 2.500V7c2-1 2.700 0 2.700 0 2-.7 2.500.6 2.500.6 2-.4 2.600.6 2.600 2V13l-1.500 3v2.500H6V16L1 10.500c-1-1.500.7-2.500 2-1z" fill="#fff" stroke="#111" stroke-width="1.100"/><path d="M7 11v4M9.300 11v4M11.500 11v4" stroke="#111"/></svg>
</body>
</html>
